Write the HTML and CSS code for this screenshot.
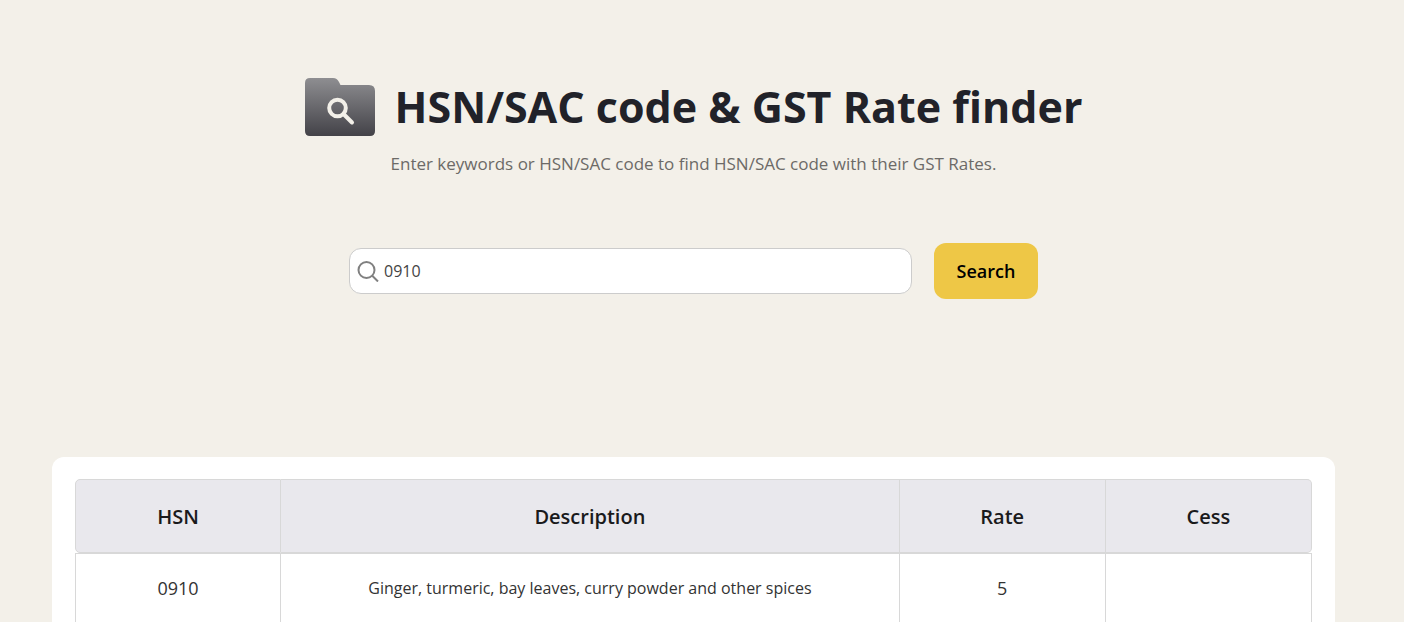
FILE: index.html
```html
<!DOCTYPE html>
<html lang="en">
<head>
	<meta charset="UTF-8">
	<meta name="viewport" content="width=device-width, initial-scale=1">
	<title>HSN/SAC code &amp; GST Rate finder</title>
	<link rel="stylesheet" href="styles.css">
</head>
<body>
<header class="finder-head">
	<div class="title-row">
		<svg class="folder-icon" viewBox="0 0 70 58" aria-hidden="true">
			<defs>
				<linearGradient id="folder-fill" x1="0" y1="0" x2="0" y2="1">
					<stop offset="0" stop-color="#8e8e91"/>
					<stop offset="1" stop-color="#434248"/>
				</linearGradient>
			</defs>
			<path fill="url(#folder-fill)" d="M5 0H28C31 0 32.500 1.500 34 4L35.500 7H64Q70 7 70 13V53Q70 58 65 58H5Q0 58 0 53V5Q0 0 5 0Z"/>
			<circle cx="32.500" cy="30" r="8.300" fill="none" stroke="#f3f0e9" stroke-width="4"/>
			<path d="M38.500 36L47 44.500" fill="none" stroke="#f3f0e9" stroke-width="4" stroke-linecap="round"/>
		</svg>
		<h1>HSN/SAC code &amp; GST Rate finder</h1>
	</div>
	<p class="subtitle">Enter keywords or HSN/SAC code to find HSN/SAC code with their GST Rates.</p>
</header>

<form class="search-form">
	<label class="search-box">
		<svg class="search-icon" viewBox="0 0 22 22" aria-hidden="true">
			<circle cx="9.500" cy="10" r="8" fill="none" stroke="#808080" stroke-width="2"/>
			<path d="M15 15.500L21 21.500" fill="none" stroke="#808080" stroke-width="2"/>
		</svg>
		<input type="text" name="keyword" value="0910" aria-label="Keyword or HSN/SAC code">
	</label>
	<button type="submit" class="search-btn">Search</button>
</form>

<main class="result-card">
	<table class="result-table">
		<colgroup>
			<col class="col-small">
			<col class="col-desc">
			<col class="col-small">
			<col class="col-small">
		</colgroup>
		<thead>
			<tr>
				<th>HSN</th>
				<th>Description</th>
				<th>Rate</th>
				<th>Cess</th>
			</tr>
		</thead>
		<tbody>
			<tr>
				<td>0910</td>
				<td class="desc">Ginger, turmeric, bay leaves, curry powder and other spices</td>
				<td>5</td>
				<td></td>
			</tr>
		</tbody>
	</table>
</main>
</body>
</html>
```
FILE: styles.css
```css
* {
	box-sizing: border-box;
}
html {
	background: #f3f0e9;
	scrollbar-width: none;
}
body {
	margin: 0;
	padding: 76px 69px 0 52px;
	font-family: "Open Sans", sans-serif;
	color: #333;
}

/* heading */
.finder-head {
	text-align: center;
}
.title-row {
	display: flex;
	justify-content: center;
	align-items: center;
	gap: 20px;
}
.folder-icon {
	width: 70px;
	height: 58px;
	flex: none;
}
h1 {
	margin: 0;
	font-size: 43px;
	line-height: 62px;
	font-weight: 700;
	color: #212229;
}
.subtitle {
	margin: 14px 0 0;
	font-size: 17px;
	line-height: 24px;
	color: #6c6a67;
}

/* search */
.search-form {
	display: flex;
	justify-content: center;
	align-items: center;
	gap: 22px;
	margin-top: 67px;
}
.search-box {
	display: flex;
	align-items: center;
	gap: 5px;
	width: 563px;
	height: 46px;
	padding: 0 7px;
	background: #fff;
	border: 1px solid #ccc;
	border-radius: 12px;
}
.search-icon {
	width: 22px;
	height: 22px;
	flex: none;
}
.search-box input {
	flex: 1;
	min-width: 0;
	padding: 0;
	border: 0;
	outline: 0;
	background: none;
	font: 16px/24px "Open Sans", sans-serif;
	color: #444;
}
.search-btn {
	width: 104px;
	height: 56px;
	padding: 0;
	border: 0;
	border-radius: 12px;
	background: #eec746;
	font: 600 18px/24px "Open Sans", sans-serif;
	color: #000;
	cursor: pointer;
}

/* results */
.result-card {
	margin-top: 158px;
	padding: 22px 23px;
	background: #fff;
	border-radius: 12px;
}
.result-table {
	width: 100%;
	table-layout: fixed;
	border-collapse: separate;
	border-spacing: 0;
	text-align: center;
}
.col-small {
	width: 16.6667%;
}
.col-desc {
	width: 50%;
}
th {
	height: 74px;
	padding: 2px 12px 0;
	background: #e9e8ed;
	border: 1px solid #d8d8d8;
	border-left: 0;
	font-size: 20px;
	line-height: 28px;
	font-weight: 600;
	color: #1a1a1c;
}
th:first-child {
	border-left: 1px solid #d8d8d8;
	border-radius: 5px 0 0 5px;
}
th:last-child {
	border-radius: 0 5px 5px 0;
}
td {
	height: 70px;
	padding: 0 12px;
	border: 1px solid #d8d8d8;
	border-left: 0;
	font-size: 18px;
	line-height: 24px;
}
td:first-child {
	border-left: 1px solid #d8d8d8;
}
td.desc {
	font-size: 16px;
}
```
